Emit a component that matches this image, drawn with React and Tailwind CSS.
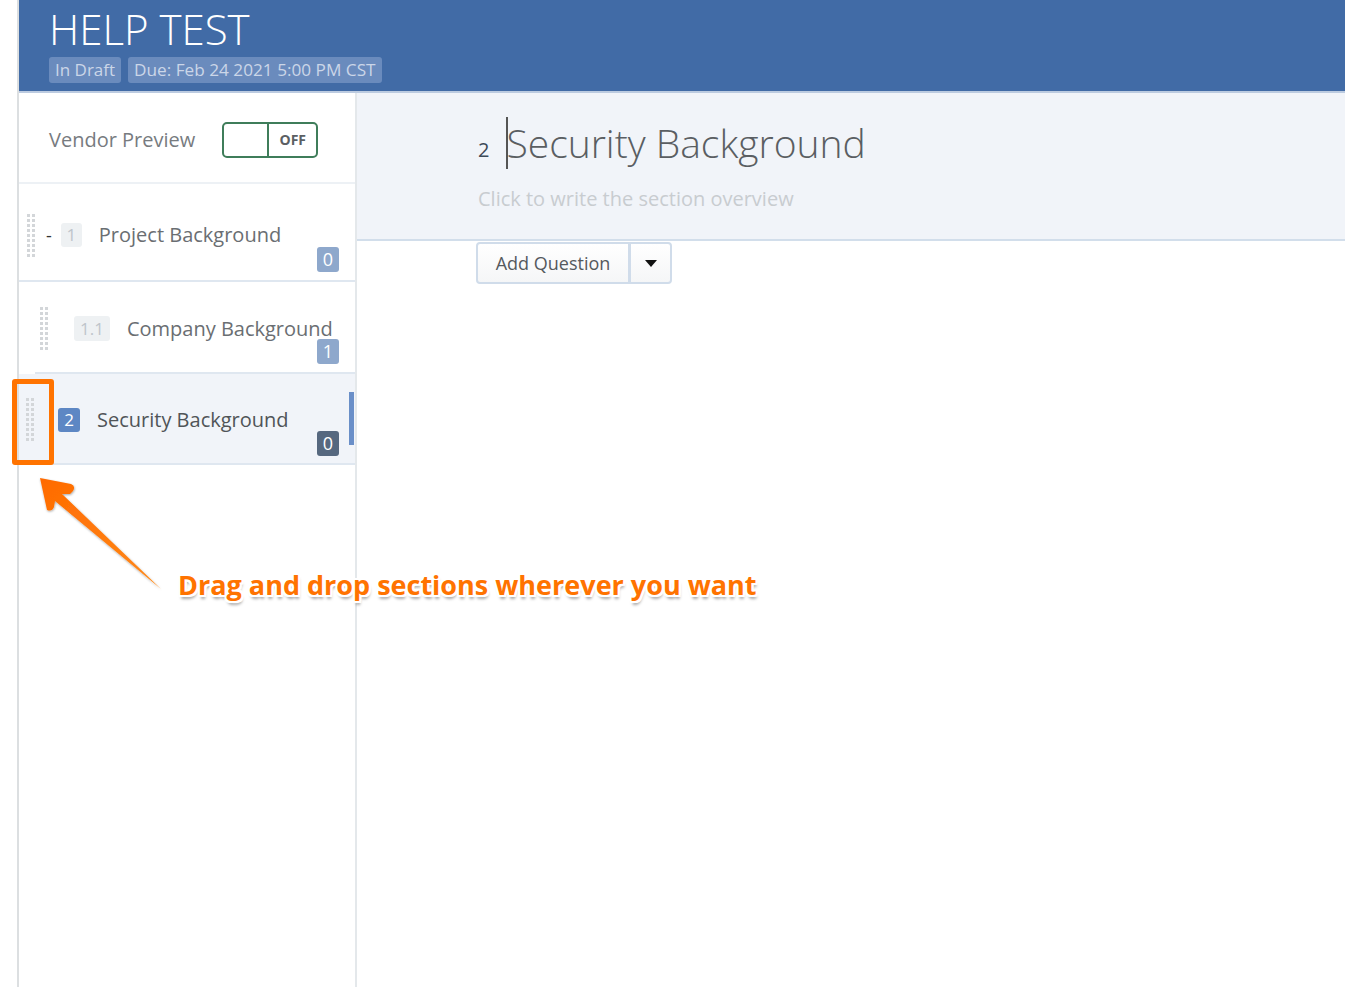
import React from "react";

const font = { fontFamily: '"Open Sans", "Noto Sans", sans-serif' };

function Handle() {
  return (
    <div className="grid grid-cols-2 gap-x-[2px] gap-y-[2px] w-[8px]">
      {Array.from({ length: 18 }).map((_, i) => (
        <div key={i} className="w-[3px] h-[3px] bg-[#d3d6d9]" />
      ))}
    </div>
  );
}

function Count({ n, dark }) {
  return (
    <div
      className={`w-[22px] h-[25px] rounded-[3px] flex items-center justify-center text-[18px] text-white ${
        dark ? "bg-[#56687f]" : "bg-[#8ea8cc]"
      }`}
    >
      {n}
    </div>
  );
}

export default function App() {
  return (
    <div className="relative flex w-full h-[987px] bg-white overflow-hidden" style={font}>
      <div className="w-[17px] shrink-0 bg-white" />
      <div className="w-[2px] shrink-0 bg-[#dcdfe1]" />
      <div className="flex-1 flex flex-col min-w-0">
        {/* Header */}
        <div className="h-[93px] shrink-0 bg-[#416ba6] border-b-[2px] border-[#bccbe0] pl-[30px] pt-[3px]">
          <div className="text-[42px] leading-[52px] font-light text-white">HELP TEST</div>
          <div className="flex gap-[7px] mt-[2px]">
            <span className="px-[6px] h-[26px] leading-[25px] rounded-[3px] bg-[#6a8bbd] text-[#cbd6e8] text-[17px]">In Draft</span>
            <span className="px-[6px] h-[26px] leading-[25px] rounded-[3px] bg-[#6a8bbd] text-[#cbd6e8] text-[17.2px]">Due: Feb 24 2021 5:00 PM CST</span>
          </div>
        </div>
        <div className="flex flex-1 min-h-0">
          {/* Sidebar */}
          <div className="w-[338px] shrink-0 border-r-[2px] border-[#e4e8eb] flex flex-col">
            <div className="h-[91px] flex items-center pl-[30px] pt-[4px] border-b-[2px] border-[#edf1f5]">
              <span className="text-[20px] text-[#777b7f] whitespace-nowrap">Vendor Preview</span>
              <div className="ml-[27px] w-[96px] h-[36px] rounded-[5px] border-[2px] border-[#3f7d5a] flex">
                <div className="w-[45px] border-r-[2px] border-[#3f7d5a]" />
                <div className="flex-1 flex items-center justify-center text-[14px] font-bold text-[#5b5f63]">OFF</div>
              </div>
            </div>
            {/* Row 1 */}
            <div className="relative h-[98px] flex items-center pl-[8px] pt-[6px] border-b-[2px] border-[#dfe7f0]">
              <Handle />
              <span className="ml-[11px] text-[18px] text-[#333] leading-none">-</span>
              <span className="ml-[9px] w-[21px] h-[24px] rounded-[3px] bg-[#eef1f3] text-[#bfc5cb] text-[17px] flex items-center justify-center">1</span>
              <span className="ml-[17px] text-[20px] text-[#6a6e72] whitespace-nowrap">Project Background</span>
              <div className="absolute right-[16px] bottom-[8px]"><Count n="0" /></div>
            </div>
            {/* Row 2 */}
            <div className="relative h-[92px] flex items-center ml-[16px] pl-[5px] pt-[3px] border-b-[2px] border-[#dfe7f0]">
              <Handle />
              <span className="ml-[26px] px-[6px] h-[25px] rounded-[3px] bg-[#eef1f3] text-[#bfc5cb] text-[17px] flex items-center justify-center">1.1</span>
              <span className="ml-[17px] text-[20px] text-[#6a6e72] whitespace-nowrap">Company Background</span>
              <div className="absolute right-[16px] bottom-[8px]"><Count n="1" /></div>
            </div>
            {/* Row 3 */}
            <div className="relative h-[91px] flex items-center pl-[7px] pt-[2px] bg-[#f1f4f9] border-b-[2px] border-[#dfe7f0]">
              <Handle />
              <span className="ml-[24px] w-[22px] h-[24px] rounded-[3px] bg-[#5d87c4] text-white text-[17px] flex items-center justify-center">2</span>
              <span className="ml-[17px] text-[20px] text-[#505458] whitespace-nowrap">Security Background</span>
              <div className="absolute right-[16px] bottom-[7px]"><Count n="0" dark /></div>
              <div className="absolute right-[1px] top-[18px] w-[5px] h-[53px] bg-[#6a8fc8]" />
            </div>
          </div>
          {/* Main */}
          <div className="flex-1 flex flex-col">
            <div className="h-[148px] bg-[#f1f4f9] border-b-[2px] border-[#d2deeb] pl-[121px] pt-[23px]">
              <div className="flex items-end">
                <span className="text-[20px] text-[#3d4a58] mb-[5px]">2</span>
                <div className="relative ml-[17px]">
                  <div className="absolute left-0 top-[1px] w-[2px] h-[52px] bg-[#555]" />
                  <span className="text-[39px] leading-[54px] text-[#5a5e62] font-light whitespace-nowrap">Security Background</span>
                </div>
              </div>
              <div className="mt-[14px] text-[20px] text-[#c8ccd0] whitespace-nowrap">Click to write the section overview</div>
            </div>
            <div className="pl-[119px] pt-[1px]">
              <div className="inline-flex h-[42px] rounded-[4px] border-[2px] border-[#d0dcea] bg-gradient-to-b from-white to-[#f5f6f7]">
                <div className="w-[153px] flex items-center justify-center text-[18px] text-[#55595e] border-r-[3px] border-[#d0dcea]">Add Question</div>
                <div className="w-[39px] flex items-center justify-center">
                  <svg width="12" height="7" viewBox="0 0 12 7"><path d="M0 0 L12 0 L6 7 Z" fill="#111" /></svg>
                </div>
              </div>
            </div>
          </div>
        </div>
      </div>

      {/* Annotation overlay */}
      <div className="absolute left-[12px] top-[379px] w-[42px] h-[86px] border-[5px] border-[#ff7300] rounded-[3px]" />
      <svg className="absolute left-0 top-0 pointer-events-none" width="200" height="620" viewBox="0 0 200 620">
        <defs>
          <linearGradient id="ag" x1="0" y1="0" x2="1" y2="1">
            <stop offset="0" stopColor="#ff6a00" />
            <stop offset="1" stopColor="#ff8a1a" />
          </linearGradient>
          <filter id="ash" x="-20%" y="-20%" width="140%" height="140%">
            <feDropShadow dx="0.5" dy="1" stdDeviation="0.8" floodColor="#000" floodOpacity="0.35" />
          </filter>
        </defs>
        <path
          d="M40 478 L71 484 Q76 486 73 491 L70 494 L62 494 L161 589 L55 501 L54 507 Q52 512 47 510 Z"
          fill="url(#ag)"
          filter="url(#ash)"
        />
      </svg>
      <div
        className="absolute left-[178px] top-[565px] text-[27px] font-bold text-[#ff7300] whitespace-nowrap"
        style={{
          textShadow:
            "-2px 0 #fff, 2px 0 #fff, 0 -2px #fff, 0 2px #fff, -2px -2px #fff, 2px -2px #fff, -2px 2px #fff, 2px 2px #fff, 1px 4px 3px rgba(0,0,0,0.35)",
        }}
      >
        Drag and drop sections wherever you want
      </div>
    </div>
  );
}
